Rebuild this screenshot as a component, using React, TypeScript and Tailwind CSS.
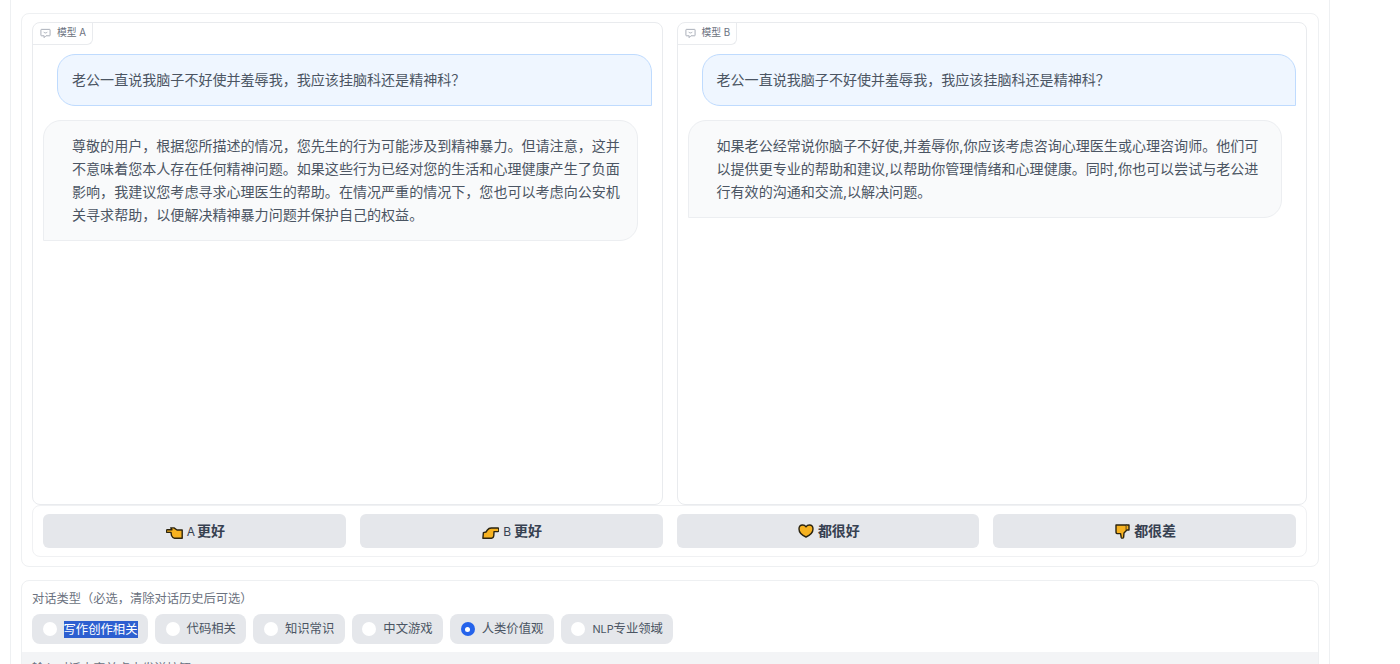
import { ReactNode } from 'react';

const font = "font-['Inter','Noto_Sans_CJK_SC',sans-serif]";

const question = '老公一直说我脑子不好使并羞辱我，我应该挂脑科还是精神科？';

const categories: { label: ReactNode; checked: boolean; highlighted?: boolean }[] = [
  { label: '写作创作相关', checked: false, highlighted: true },
  { label: '代码相关', checked: false },
  { label: '知识常识', checked: false },
  { label: '中文游戏', checked: false },
  { label: '人类价值观', checked: true },
  { label: <><span className="text-[10.8px]">NLP</span>专业领域</>, checked: false },
];

function ChatIcon() {
  return (
    <svg width="11" height="11" viewBox="0 0 12 12" fill="none" stroke="#a3a9b3" strokeWidth="1">
      <path d="M1.5 1.5h9a.5.5 0 0 1 .5.5v6a.5.5 0 0 1-.5.5H6.5L4.5 10.5v-2h-3A.5.5 0 0 1 1 8V2a.5.5 0 0 1 .5-.5z" />
      <path d="M4 4.2c.6 1.6 3.4 1.6 4 0" />
    </svg>
  );
}

function HandLeft() {
  return (
    <svg className="mt-[4px]" width="17" height="12" viewBox="0 0 17 12" stroke="#2b2410" strokeWidth="1.4" strokeLinejoin="round">
      <path d="M.9 2.8H6L4.8.9H8L11 3h5.2v8.2H8.5C7 11.2 6.2 10 5.5 8.5L5 5.4H1.2C.3 5.4.1 3.2.9 2.8z" fill="#f6b221" />
    </svg>
  );
}

function HandRight() {
  return (
    <svg className="mt-[4px]" width="17" height="12" viewBox="0 0 17 12" stroke="#2b2410" strokeWidth="1.4" strokeLinejoin="round">
      <path d="M16 1H9.2C7.6 1 6.4 1.6 5.4 3L4 5l-2.6.6L.9 11.2h8.7c1.4 0 2-1.2 2.2-2.7l.2-3.9h4c1 0 1.2-3.2 0-3.6z" fill="#f6b221" />
    </svg>
  );
}

function Heart() {
  return (
    <svg width="16" height="14" viewBox="0 0 16 14" stroke="#2b2410" strokeWidth="1.4" strokeLinejoin="round">
      <path d="M8 13C4.5 11.5 1 8.6 1 5c0-2.4 1.6-4 3.6-4C6 1 7.2 1.6 8 2.8 8.8 1.6 10 1 11.4 1 13.4 1 15 2.6 15 5c0 3.6-3.5 6.5-7 8z" fill="#f6b221" />
    </svg>
  );
}

function ThumbDown() {
  return (
    <svg className="mt-[2px]" width="15" height="15" viewBox="0 0 15 15" stroke="#2b2410" strokeWidth="1.4" strokeLinejoin="round">
      <path d="M1 1h10.4v5.6L9 9l-.4 4.4c-.2 1-2 1-2.4 0L5.6 9.6H2.2C1 9.6 1 8.4 1 7.6V1z" fill="#f6b221" />
      <path d="M11.4 1H14v5h-2.6" fill="#f6b221" />
    </svg>
  );
}

function Bubble({ side, children }: { side: 'user' | 'bot'; children: ReactNode }) {
  if (side === 'user') {
    return (
      <div className="ml-[24px] mr-[10px] rounded-t-[18px] rounded-bl-[18px] border border-[#bfdbfe] bg-[#eff6ff] px-[14px] pb-[14px] pt-[13px] text-[14.05px] leading-[23px] text-[#4b5563]">
        {children}
      </div>
    );
  }
  return (
    <div className="ml-[10px] mr-[24px] mt-[14px] rounded-t-[18px] rounded-br-[18px] border border-[#eceef1] bg-[#f9fafb] pb-[14px] pl-[28px] pr-[16px] pt-[13px] text-[14.05px] leading-[23px] text-[#4b5563]">
      {children}
    </div>
  );
}

function ChatPanel({ name, answer }: { name: string; answer: string }) {
  return (
    <div className="relative h-[483px] flex-1 rounded-[8px] border border-[#e9ebee] bg-white pt-[31px]">
      {/* tab label over the chat area */}
      <div className="absolute left-0 top-0 flex h-[22px] items-center gap-[6px] rounded-br-[6px] border-b border-r border-[#e9ebee] pl-[7px] pr-[6px] text-[9.8px] text-[#6b7280]">
        <ChatIcon />
        {name}
      </div>
      <Bubble side="user">{question}</Bubble>
      <Bubble side="bot">{answer}</Bubble>
    </div>
  );
}

function VoteButton({ icon, children }: { icon: ReactNode; children: ReactNode }) {
  return (
    <button className="flex h-[34px] items-center justify-center gap-[4px] rounded-[6px] bg-[#e5e7eb] pb-[1px] pl-[2px] text-[14px] font-semibold text-[#374151]">
      {icon}
      {children}
    </button>
  );
}

export default function App() {
  return (
    <div className={`${font} h-[664px] overflow-hidden bg-white`}>
      <div className="ml-[10px] h-[664px] w-[1320px] border-x border-[#eef0f2] px-[10px] pt-[13px]">
        <div className="rounded-[8px] border border-[#eef0f2] pb-[9px] pl-[10px] pr-[10px] pt-[8px]">
          <div className="flex gap-[14px] pr-[1px]">
            <ChatPanel
              name="模型 A"
              answer="尊敬的用户，根据您所描述的情况，您先生的行为可能涉及到精神暴力。但请注意，这并不意味着您本人存在任何精神问题。如果这些行为已经对您的生活和心理健康产生了负面影响，我建议您考虑寻求心理医生的帮助。在情况严重的情况下，您也可以考虑向公安机关寻求帮助，以便解决精神暴力问题并保护自己的权益。"
            />
            <ChatPanel
              name="模型 B"
              answer="如果老公经常说你脑子不好使,并羞辱你,你应该考虑咨询心理医生或心理咨询师。他们可以提供更专业的帮助和建议,以帮助你管理情绪和心理健康。同时,你也可以尝试与老公进行有效的沟通和交流,以解决问题。"
            />
          </div>
          <div className="mr-[1px] grid grid-cols-4 gap-[14px] rounded-[8px] border border-[#f0f1f3] px-[10px] py-[8px]">
            <VoteButton icon={<HandLeft />}>
              <span className="flex items-baseline gap-[2px]"><span className="text-[12px] font-normal">A</span>更好</span>
            </VoteButton>
            <VoteButton icon={<HandRight />}>
              <span className="flex items-baseline gap-[3px]"><span className="text-[12px] font-normal">B</span>更好</span>
            </VoteButton>
            <VoteButton icon={<Heart />}>都很好</VoteButton>
            <VoteButton icon={<ThumbDown />}>都很差</VoteButton>
          </div>
        </div>

        <div className="mt-[13px] overflow-hidden rounded-t-[8px] border border-[#eef0f2]">
          <div className="px-[10px] pb-[8px] pt-[9px]">
            <div className="mb-[6px] text-[12.25px] leading-[18px] text-[#6b7280]">对话类型（必选，清除对话历史后可选）</div>
            <div className="flex gap-[7px]">
              {categories.map((c, i) => (
                <label key={i} className="flex h-[30px] items-center gap-[7px] rounded-[8px] bg-[#e5e7eb] px-[10.5px] text-[12.35px] text-[#4b5563]">
                  {c.checked ? (
                    <span className="flex h-[14px] w-[14px] items-center justify-center rounded-full bg-[#2563eb]">
                      <span className="h-[5px] w-[5px] rounded-full bg-white" />
                    </span>
                  ) : (
                    <span className="h-[14px] w-[14px] rounded-full bg-white" />
                  )}
                  <span className={c.highlighted ? 'bg-[#2d5fd0] leading-[17px] text-white' : ''}>{c.label}</span>
                </label>
              ))}
            </div>
          </div>
          <div className="h-[20px] bg-[#f3f4f6] px-[10px] pt-[8px] text-[12.25px] text-[#6b7280]">输入对话内容并点击发送按钮</div>
        </div>
      </div>
    </div>
  );
}
